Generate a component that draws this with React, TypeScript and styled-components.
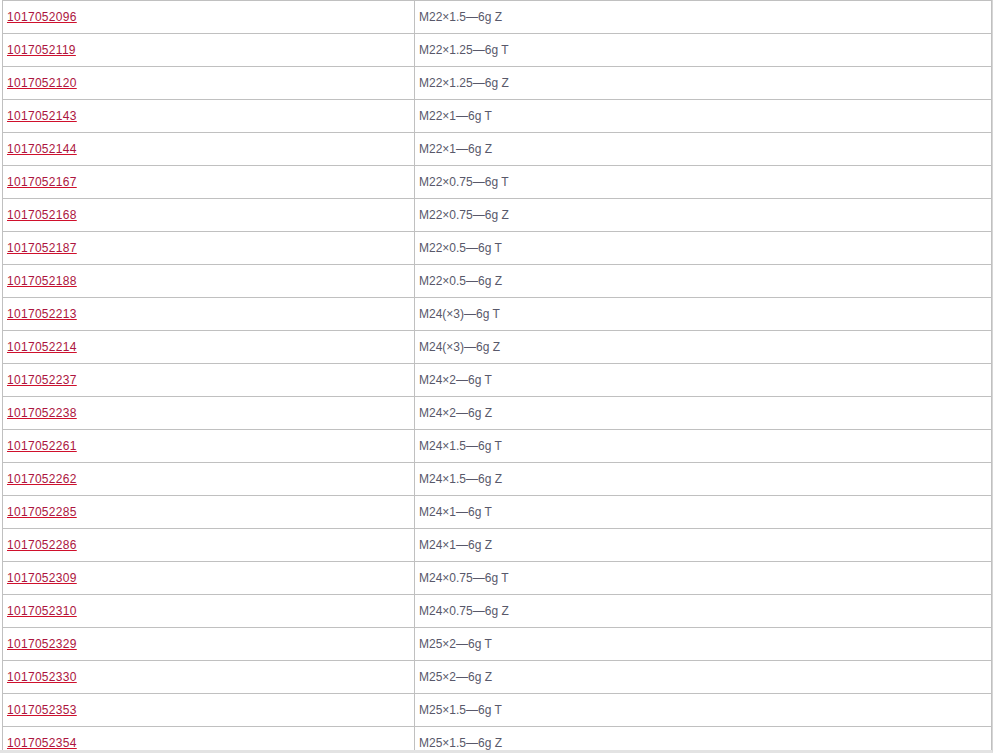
/*=============================================== Parts table ===============================================*/

/*==================== Imports ====================*/

import React from "react"
import styled, { createGlobalStyle } from "styled-components"

/*==================== Data ====================*/

const rows: partRow[] = [
    { code: "1017052096", spec: "M22×1.5—6g Z" },
    { code: "1017052119", spec: "M22×1.25—6g T" },
    { code: "1017052120", spec: "M22×1.25—6g Z" },
    { code: "1017052143", spec: "M22×1—6g T" },
    { code: "1017052144", spec: "M22×1—6g Z" },
    { code: "1017052167", spec: "M22×0.75—6g T" },
    { code: "1017052168", spec: "M22×0.75—6g Z" },
    { code: "1017052187", spec: "M22×0.5—6g T" },
    { code: "1017052188", spec: "M22×0.5—6g Z" },
    { code: "1017052213", spec: "M24(×3)—6g T" },
    { code: "1017052214", spec: "M24(×3)—6g Z" },
    { code: "1017052237", spec: "M24×2—6g T" },
    { code: "1017052238", spec: "M24×2—6g Z" },
    { code: "1017052261", spec: "M24×1.5—6g T" },
    { code: "1017052262", spec: "M24×1.5—6g Z" },
    { code: "1017052285", spec: "M24×1—6g T" },
    { code: "1017052286", spec: "M24×1—6g Z" },
    { code: "1017052309", spec: "M24×0.75—6g T" },
    { code: "1017052310", spec: "M24×0.75—6g Z" },
    { code: "1017052329", spec: "M25×2—6g T" },
    { code: "1017052330", spec: "M25×2—6g Z" },
    { code: "1017052353", spec: "M25×1.5—6g T" },
    { code: "1017052354", spec: "M25×1.5—6g Z" },
]

/*==================== Component ====================*/

const App = () => (
    <>
        <GlobalStyle />
        <Frame>
            <Table>
                <tbody>
                    {rows.map(row => (
                        <Row key={row.code}>
                            <CodeCell>
                                <CodeLink href="#">{row.code}</CodeLink>
                            </CodeCell>
                            <SpecCell>{row.spec}</SpecCell>
                        </Row>
                    ))}
                </tbody>
            </Table>
        </Frame>
    </>
)

export default App

/*==================== Types ====================*/

interface partRow {
    code: string
    spec: string
}

/*==================== Styles ====================*/

const GlobalStyle = createGlobalStyle`
    html,
    body {
        margin: 0;
        padding: 0;
        background-color: #ffffff;
        font-family: "Liberation Sans", Arial, sans-serif;
        overflow: hidden;
    }
`

const Frame = styled.div`
    width: 993px;
    height: 753px;
    overflow: hidden;
    box-sizing: border-box;
    padding-left: 2px;
    border-right: 1px solid #d6d6d6;
    border-bottom: 3px solid #e3e3e3;
`

const Table = styled.table`
    width: 990px;
    border-collapse: collapse;
    table-layout: fixed;
    font-size: 12px;
`

const Row = styled.tr`
    height: 33px;
`

const Cell = styled.td`
    border: 1px solid #c0c0c0;
    padding: 0 4px;
    height: 32px;
    line-height: 32px;
    white-space: nowrap;
    vertical-align: middle;
`

const CodeCell = styled(Cell)`
    width: 403px;
`

const SpecCell = styled(Cell)`
    color: #58586a;
`

const CodeLink = styled.a`
    color: #ac1540;
    letter-spacing: 0.3px;
    text-decoration: underline;
    text-decoration-color: #d0102c;
`
